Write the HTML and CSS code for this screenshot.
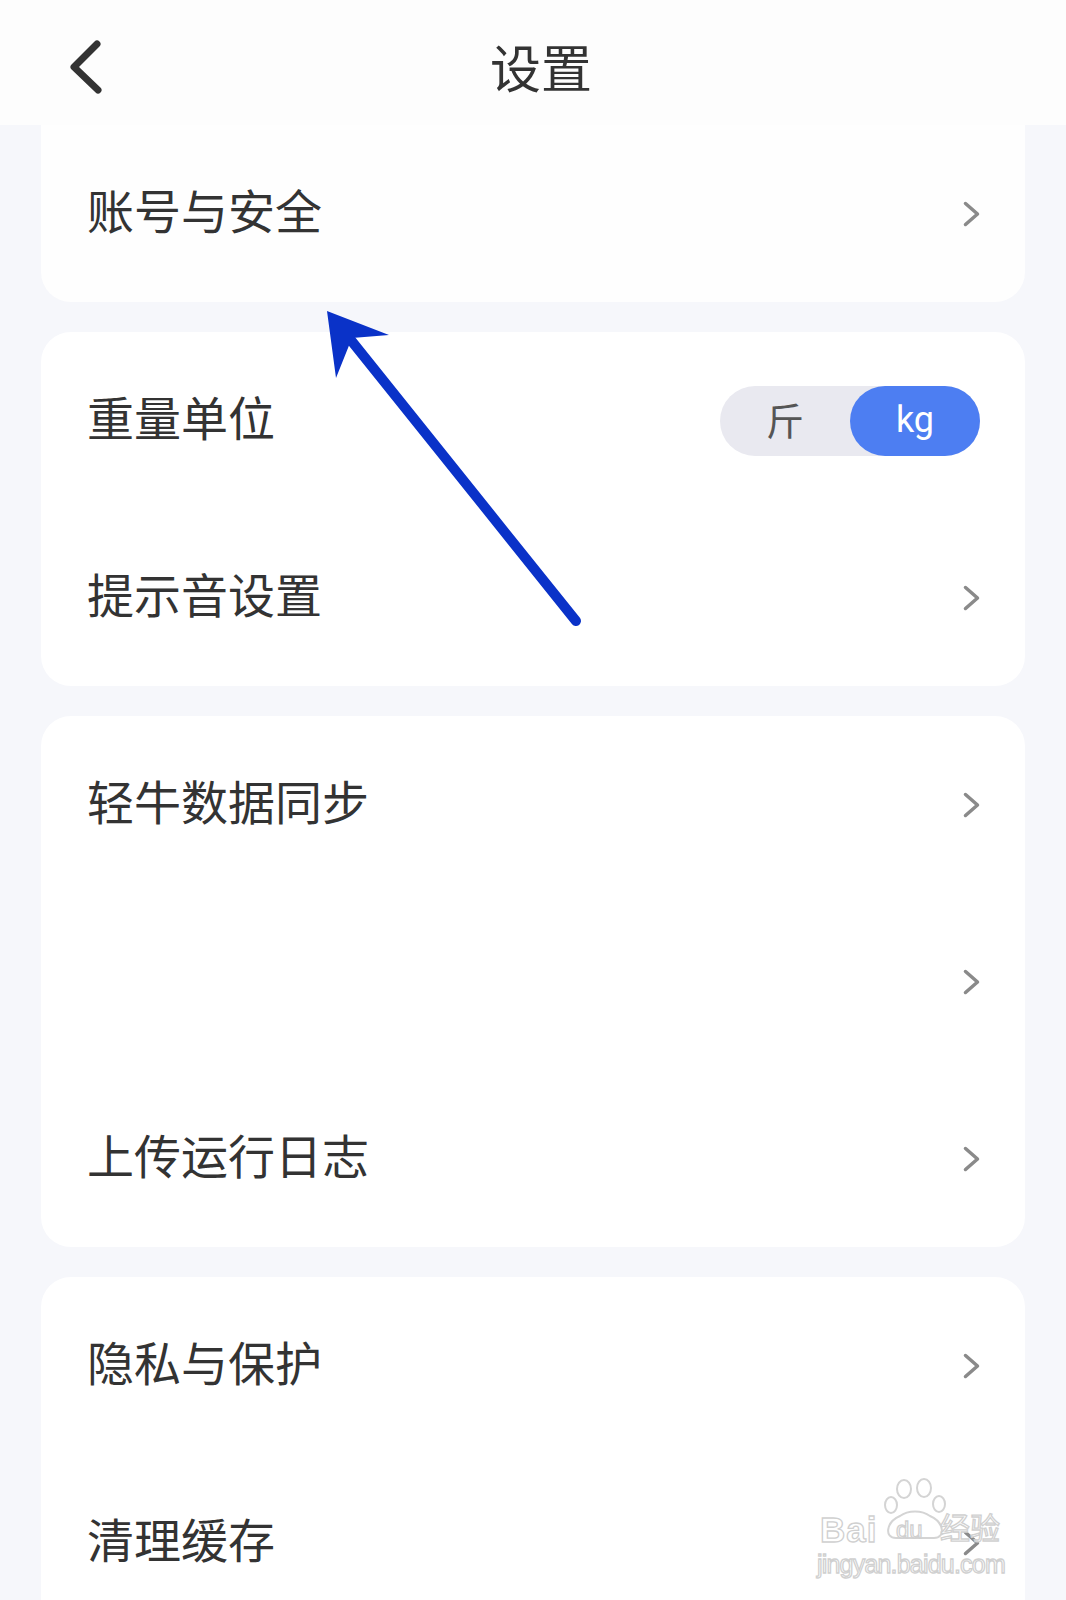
FILE: index.html
```html
<!DOCTYPE html>
<html lang="zh-CN">
<head>
<meta charset="utf-8">
<title>设置</title>
<link rel="stylesheet" href="styles.css">
</head>
<body>
<div class="page">
  <header class="header">
    <div class="back">
      <svg class="back-icon" width="34" height="56" viewBox="0 0 34 56"><path d="M27 5 L4 28 L28 51" fill="none" stroke="#333" stroke-width="7" stroke-linecap="round" stroke-linejoin="round"/></svg>
    </div>
    <h1 class="title">设置</h1>
    <div class="spacer"></div>
  </header>

  <section class="card card-first">
    <div class="row"><span class="label">账号与安全</span><svg class="chev" width="17" height="26" viewBox="0 0 17 26"><path d="M2.5 2.5 L14.5 13 L2.5 23.5" fill="none" stroke="#8a8a8a" stroke-width="3.5" stroke-linecap="round" stroke-linejoin="round"/></svg></div>
  </section>

  <section class="card">
    <div class="row"><span class="label">重量单位</span>
      <div class="toggle"><span class="seg">斤</span><span class="seg seg-on">kg</span></div>
    </div>
    <div class="row"><span class="label">提示音设置</span><svg class="chev" width="17" height="26" viewBox="0 0 17 26"><path d="M2.5 2.5 L14.5 13 L2.5 23.5" fill="none" stroke="#8a8a8a" stroke-width="3.5" stroke-linecap="round" stroke-linejoin="round"/></svg></div>
  </section>

  <section class="card">
    <div class="row"><span class="label">轻牛数据同步</span><svg class="chev" width="17" height="26" viewBox="0 0 17 26"><path d="M2.5 2.5 L14.5 13 L2.5 23.5" fill="none" stroke="#8a8a8a" stroke-width="3.5" stroke-linecap="round" stroke-linejoin="round"/></svg></div>
    <div class="row"><span class="label"></span><svg class="chev" width="17" height="26" viewBox="0 0 17 26"><path d="M2.5 2.5 L14.5 13 L2.5 23.5" fill="none" stroke="#8a8a8a" stroke-width="3.5" stroke-linecap="round" stroke-linejoin="round"/></svg></div>
    <div class="row"><span class="label">上传运行日志</span><svg class="chev" width="17" height="26" viewBox="0 0 17 26"><path d="M2.5 2.5 L14.5 13 L2.5 23.5" fill="none" stroke="#8a8a8a" stroke-width="3.5" stroke-linecap="round" stroke-linejoin="round"/></svg></div>
  </section>

  <section class="card">
    <div class="row"><span class="label">隐私与保护</span><svg class="chev" width="17" height="26" viewBox="0 0 17 26"><path d="M2.5 2.5 L14.5 13 L2.5 23.5" fill="none" stroke="#8a8a8a" stroke-width="3.5" stroke-linecap="round" stroke-linejoin="round"/></svg></div>
    <div class="row"><span class="label">清理缓存</span><svg class="chev" width="17" height="26" viewBox="0 0 17 26"><path d="M2.5 2.5 L14.5 13 L2.5 23.5" fill="none" stroke="#8a8a8a" stroke-width="3.5" stroke-linecap="round" stroke-linejoin="round"/></svg></div>
  </section>

  <svg class="arrow" width="1066" height="700" viewBox="0 0 1066 700">
    <line x1="576" y1="621" x2="346" y2="334" stroke="#0a32c8" stroke-width="10" stroke-linecap="round"/>
    <polygon points="327,311 389,335 352,338 336,378" fill="#0a32c8"/>
  </svg>

  <div class="watermark">
    <svg class="paw" width="66" height="62" viewBox="0 0 66 62">
      <g fill="#fff" stroke="#d4d4d4" stroke-width="2">
        <ellipse cx="22" cy="11" rx="7" ry="9"/>
        <ellipse cx="42" cy="10" rx="7" ry="9"/>
        <ellipse cx="9" cy="27" rx="6" ry="8"/>
        <ellipse cx="57" cy="26" rx="6" ry="8"/>
        <path d="M14 60 C2 60 4 44 18 38 C26 32 40 32 48 38 C62 44 64 60 52 60 Z"/>
      </g>
    </svg>
    <span class="wm-bai">Bai</span>
    <span class="wm-du">du</span>
    <span class="wm-jy">经验</span>
    <span class="wm-url">jingyan.baidu.com</span>
  </div>
</div>
</body>
</html>
```

FILE: styles.css
```css
* { box-sizing: border-box; }

html, body {
  margin: 0;
  padding: 0;
}

body {
  background: #f6f7fb;
  font-family: "Noto Sans CJK SC", "Noto Sans", sans-serif;
  color: #333;
}

.page {
  position: relative;
  width: 1066px;
  min-height: 1600px;
  overflow: hidden;
}

.header {
  height: 125px;
  background: #fdfdfd;
  display: grid;
  grid-template-columns: 1fr auto 1fr;
  align-items: center;
  padding: 8px 54px 0 70px;
}

.back {
  display: flex;
  align-items: center;
}

.back-icon { display: block; }

.title {
  margin: 0;
  font-size: 51px;
  font-weight: 400;
  line-height: 1;
  color: #333;
}

.card {
  margin: 30px 41px 0;
  background: #fff;
  border-radius: 30px;
}

.card-first {
  margin-top: 0;
  border-radius: 0 0 30px 30px;
  background: #fefefe;
}

.row {
  height: 177px;
  display: flex;
  align-items: center;
  justify-content: space-between;
  padding: 0 45px 0 46px;
}

.label {
  font-size: 47px;
  line-height: 1;
  color: #333;
  margin-bottom: 10px;
}

.chev { display: block; flex: none; }

.toggle {
  width: 260px;
  height: 70px;
  border-radius: 35px;
  background: #e9e9f0;
  display: flex;
}

.seg {
  flex: 1;
  display: flex;
  align-items: center;
  justify-content: center;
  font-size: 38px;
  color: #555;
  border-radius: 35px;
  line-height: 1;
  padding-bottom: 4px;
}

.seg-on {
  background: #4d7ef2;
  color: #fff;
  font-family: Roboto, "Noto Sans", sans-serif;
  font-size: 36px;
  padding-bottom: 2px;
}

.arrow {
  position: absolute;
  left: 0;
  top: 0;
  pointer-events: none;
}

.watermark {
  position: absolute;
  left: 816px;
  top: 1478px;
  width: 200px;
  height: 100px;
  pointer-events: none;
}

.wm-bai, .wm-du, .wm-jy, .wm-url {
  position: absolute;
  color: #fff;
  -webkit-text-stroke: 1.3px #d0d0d0;
  white-space: nowrap;
  line-height: 1;
}

.paw {
  position: absolute;
  left: 66px;
  top: 0;
}

.wm-bai {
  left: 4px;
  top: 34px;
  font-family: "Liberation Sans", sans-serif;
  font-size: 35px;
  font-weight: 700;
  letter-spacing: 1px;
}

.wm-du {
  left: 80px;
  top: 40px;
  font-family: "Liberation Sans", sans-serif;
  font-size: 24px;
}

.wm-jy {
  left: 124px;
  top: 33px;
  font-family: "Noto Sans CJK SC", sans-serif;
  font-size: 30px;
}

.wm-url {
  left: 1px;
  top: 74px;
  font-family: "Liberation Sans", sans-serif;
  font-size: 25px;
  letter-spacing: -0.8px;
}
```
